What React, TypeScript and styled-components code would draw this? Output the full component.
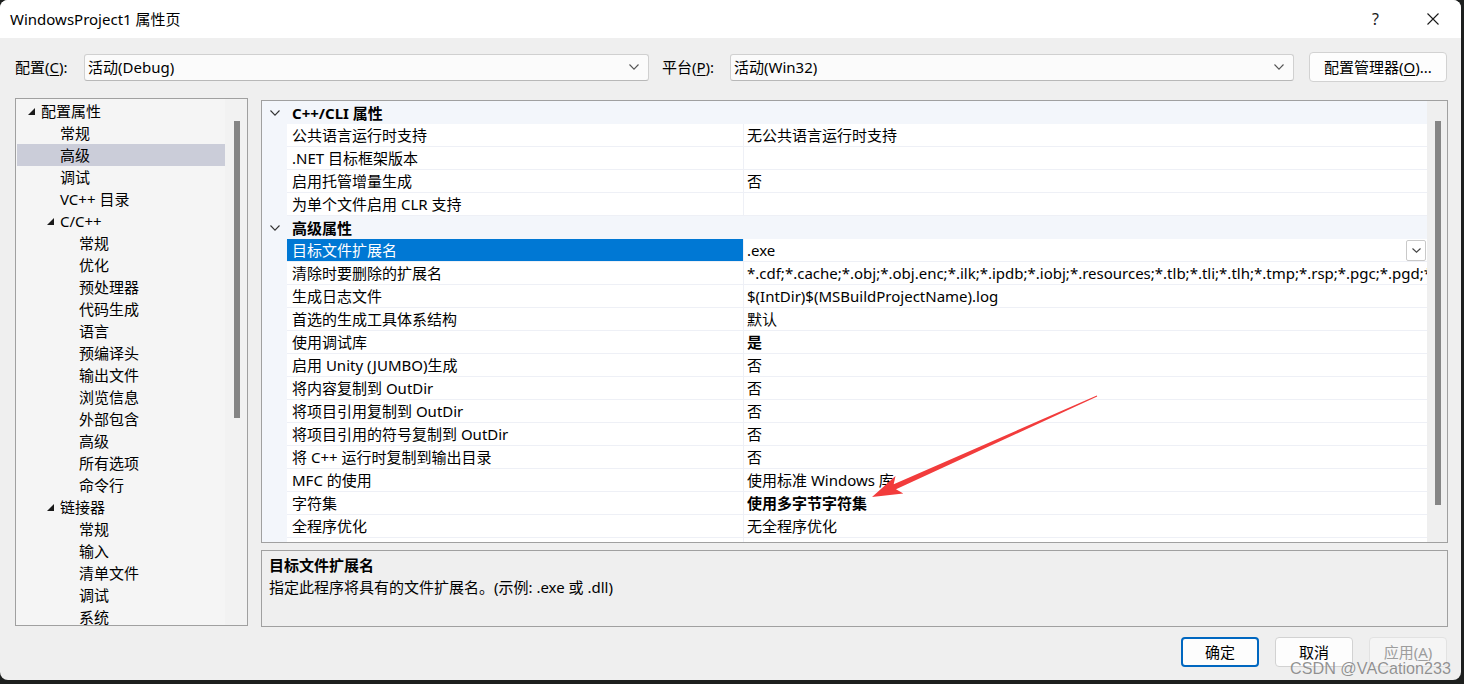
import React from "react";
import styled, { createGlobalStyle } from "styled-components";

const FONT = `"Noto Sans", "Noto Sans CJK SC", sans-serif`;

const Global = createGlobalStyle`
  html, body { margin: 0; padding: 0; background: #1d1f1e; }
  body { font-family: ${FONT}; font-size: 15px; color: #000; }
  * { box-sizing: border-box; }
  #root { width: 1464px; height: 684px; position: relative; overflow: hidden; }
`;

const Window = styled.div`
  width: 1461px;
  height: 680px;
  background: #efefef;
  border-radius: 8px;
  overflow: hidden;
  display: flex;
  flex-direction: column;
`;

const TitleBar = styled.div`
  height: 38px;
  background: #ffffff;
  display: flex;
  align-items: center;
  padding-left: 10px;
  flex: none;
`;

const TitleText = styled.div`
  flex: 1;
  font-size: 15px;
  line-height: 20px;
`;

const CaptionButton = styled.div`
  width: 57px;
  height: 38px;
  display: flex;
  align-items: center;
  justify-content: center;
  font-size: 16px;
  color: #1a1a1a;
`;

const Content = styled.div`
  flex: 1;
  display: flex;
  flex-direction: column;
  padding: 0 13px 0 15px;
`;

const ConfigRow = styled.div`
  margin-top: 14px;
  height: 30px;
  display: flex;
  align-items: center;
`;

const FieldLabel = styled.div<{ $w: number; $ml?: number }>`
  width: ${(p) => p.$w}px;
  margin-left: ${(p) => p.$ml ?? 0}px;
  flex: none;
  line-height: 20px;
`;

const U = styled.span`
  text-decoration: underline;
  text-underline-offset: 2px;
`;

const Combo = styled.div<{ $w: number }>`
  width: ${(p) => p.$w}px;
  height: 27px;
  flex: none;
  background: #fbfbfb;
  border: 1px solid #d0d0d0;
  border-bottom-color: #b8b8b8;
  border-radius: 3px;
  display: flex;
  align-items: center;
  padding: 0 9px 0 3px;
`;

const ComboText = styled.div`
  flex: 1;
  line-height: 20px;
  white-space: nowrap;
`;

const PushButton = styled.div<{ $w: number; $variant?: "default" | "primary" | "disabled"; $ml?: number }>`
  width: ${(p) => p.$w}px;
  height: 30px;
  flex: none;
  margin-left: ${(p) => p.$ml ?? 0}px;
  display: flex;
  align-items: center;
  justify-content: center;
  border-radius: 4px;
  line-height: 20px;
  background: ${(p) => (p.$variant === "disabled" ? "#f5f5f5" : "#fdfdfd")};
  border: ${(p) =>
    p.$variant === "primary"
      ? "2px solid #0067c0"
      : p.$variant === "disabled"
      ? "1px solid #e2e2e2"
      : "1px solid #d2d2d2"};
  color: ${(p) => (p.$variant === "disabled" ? "#9d9d9d" : "#000")};
`;

const Main = styled.div`
  margin-top: 16px;
  display: flex;
  align-items: flex-start;
  gap: 13px;
`;

const TreePanel = styled.div`
  width: 233px;
  height: 528px;
  border: 1px solid #a0a0a0;
  background: #f5f5f5;
  display: flex;
  overflow: hidden;
  flex: none;
`;

const TreeList = styled.div`
  flex: 1;
  padding: 1px 0 0 1px;
  overflow: hidden;
`;

const TreeRow = styled.div<{ $level: number; $selected?: boolean }>`
  height: 22px;
  display: flex;
  align-items: center;
  padding-left: ${(p) => 24 + p.$level * 19}px;
  background: ${(p) => (p.$selected ? "#cbcdd9" : "transparent")};
  white-space: nowrap;
  line-height: 20px;
`;

const Toggle = styled.span`
  width: 7px;
  height: 7px;
  margin-left: -13px;
  margin-right: 6px;
  display: inline-flex;
`;

const ScrollTrack = styled.div<{ $w: number; $bg: string }>`
  width: ${(p) => p.$w}px;
  flex: none;
  background: ${(p) => p.$bg};
  display: flex;
  justify-content: center;
`;

const Thumb = styled.div<{ $top: number; $h: number; $ml?: number }>`
  width: 6px;
  height: ${(p) => p.$h}px;
  margin-top: ${(p) => p.$top}px;
  margin-left: ${(p) => p.$ml ?? 0}px;
  background: #858585;
`;

const RightColumn = styled.div`
  margin-top: 2px;
  width: 1187px;
  display: flex;
  flex-direction: column;
  gap: 7px;
`;

const GridPanel = styled.div`
  height: 443px;
  border: 1px solid #a0a0a0;
  display: flex;
  background: #ffffff;
  overflow: hidden;
`;

const GridRows = styled.div`
  flex: 1;
  overflow: hidden;
`;

const CategoryRow = styled.div`
  height: 23px;
  display: grid;
  grid-template-columns: 25px 1fr;
  background: #f3f6fb;
  align-items: center;
`;

const Gutter = styled.div`
  height: 23px;
  background: #f3f6fb;
  display: flex;
  align-items: center;
  justify-content: center;
  padding-left: 1px;
`;

const CategoryTitle = styled.div`
  font-weight: 700;
  padding-left: 5px;
  line-height: 20px;
`;

const PropRow = styled.div`
  height: 23px;
  display: grid;
  grid-template-columns: 25px 457px 1fr;
`;

const NameCell = styled.div<{ $selected?: boolean }>`
  height: 23px;
  padding-left: 5px;
  display: flex;
  align-items: center;
  white-space: nowrap;
  overflow: hidden;
  line-height: 20px;
  border-bottom: 1px solid #eef0f6;
  border-right: 1px solid #eef0f6;
  background: ${(p) => (p.$selected ? "#0078d4" : "#ffffff")};
  color: ${(p) => (p.$selected ? "#ffffff" : "#000")};
`;

const ValueCell = styled.div<{ $bold?: boolean }>`
  height: 23px;
  padding-left: 3px;
  display: flex;
  align-items: center;
  white-space: nowrap;
  overflow: hidden;
  line-height: 20px;
  border-bottom: 1px solid #eef0f6;
  font-weight: ${(p) => (p.$bold ? 700 : 400)};
`;

const ValueText = styled.span`
  flex: 1;
  overflow: hidden;
`;

const DropButton = styled.div`
  width: 20px;
  height: 21px;
  flex: none;
  margin-right: 1px;
  border: 1px solid #c9c9c9;
  border-radius: 2px;
  background: #fff;
  display: flex;
  align-items: center;
  justify-content: center;
`;

const DescPanel = styled.div`
  height: 77px;
  border: 1px solid #a0a0a0;
  background: #efefef;
  padding: 3px 7px;
`;

const DescTitle = styled.div`
  font-weight: 700;
  line-height: 22px;
`;

const DescText = styled.div`
  line-height: 22px;
`;

const ButtonRow = styled.div`
  margin-top: 10px;
  display: flex;
  justify-content: flex-end;
  gap: 16px;
  padding-right: 1px;
`;

const Watermark = styled.div`
  position: absolute;
  left: 1290px;
  top: 658px;
  font-family: "Liberation Sans", Arial, sans-serif;
  font-size: 16.2px;
  line-height: 20px;
  color: rgba(105, 105, 105, 0.72);
  text-shadow: 0 0 1px rgba(255, 255, 255, 0.6);
  white-space: nowrap;
  pointer-events: none;
`;

const ArrowLayer = styled.svg`
  position: absolute;
  left: 0;
  top: 0;
  pointer-events: none;
`;

const Chevron = ({ w = 10, h = 6, color = "#555" }: { w?: number; h?: number; color?: string }) => (
  <svg width={w} height={h} viewBox={`0 0 ${w} ${h}`}>
    <polyline points={`0.5,0.5 ${w / 2},${h - 0.8} ${w - 0.5},0.5`} fill="none" stroke={color} strokeWidth="1.1" />
  </svg>
);

const Triangle = () => (
  <svg width="7" height="7" viewBox="0 0 7 7">
    <polygon points="7,0 7,7 0,7" fill="#1a1a1a" />
  </svg>
);

const CloseIcon = () => (
  <svg width="12" height="12" viewBox="0 0 12 12">
    <path d="M0.5 0.5 L11.5 11.5 M11.5 0.5 L0.5 11.5" stroke="#1a1a1a" strokeWidth="1.1" fill="none" />
  </svg>
);

type TreeItem = { t: string; l: number; open?: boolean; sel?: boolean };
const treeItems: TreeItem[] = [
  { t: "配置属性", l: 0, open: true },
  { t: "常规", l: 1 },
  { t: "高级", l: 1, sel: true },
  { t: "调试", l: 1 },
  { t: "VC++ 目录", l: 1 },
  { t: "C/C++", l: 1, open: true },
  { t: "常规", l: 2 },
  { t: "优化", l: 2 },
  { t: "预处理器", l: 2 },
  { t: "代码生成", l: 2 },
  { t: "语言", l: 2 },
  { t: "预编译头", l: 2 },
  { t: "输出文件", l: 2 },
  { t: "浏览信息", l: 2 },
  { t: "外部包含", l: 2 },
  { t: "高级", l: 2 },
  { t: "所有选项", l: 2 },
  { t: "命令行", l: 2 },
  { t: "链接器", l: 1, open: true },
  { t: "常规", l: 2 },
  { t: "输入", l: 2 },
  { t: "清单文件", l: 2 },
  { t: "调试", l: 2 },
  { t: "系统", l: 2 },
];

type GridItem =
  | { kind: "cat"; t: string }
  | { kind: "prop"; n: string; v: string; bold?: boolean; sel?: boolean };

const gridItems: GridItem[] = [
  { kind: "cat", t: "C++/CLI 属性" },
  { kind: "prop", n: "公共语言运行时支持", v: "无公共语言运行时支持" },
  { kind: "prop", n: ".NET 目标框架版本", v: "" },
  { kind: "prop", n: "启用托管增量生成", v: "否" },
  { kind: "prop", n: "为单个文件启用 CLR 支持", v: "" },
  { kind: "cat", t: "高级属性" },
  { kind: "prop", n: "目标文件扩展名", v: ".exe", sel: true },
  {
    kind: "prop",
    n: "清除时要删除的扩展名",
    v: "*.cdf;*.cache;*.obj;*.obj.enc;*.ilk;*.ipdb;*.iobj;*.resources;*.tlb;*.tli;*.tlh;*.tmp;*.rsp;*.pgc;*.pgd;*.meta;*.tlog;*.manifest;*.res;*.pch;*.exp;*.idb;*.rep;*.xdc;*.pdb",
  },
  { kind: "prop", n: "生成日志文件", v: "$(IntDir)$(MSBuildProjectName).log" },
  { kind: "prop", n: "首选的生成工具体系结构", v: "默认" },
  { kind: "prop", n: "使用调试库", v: "是", bold: true },
  { kind: "prop", n: "启用 Unity (JUMBO)生成", v: "否" },
  { kind: "prop", n: "将内容复制到 OutDir", v: "否" },
  { kind: "prop", n: "将项目引用复制到 OutDir", v: "否" },
  { kind: "prop", n: "将项目引用的符号复制到 OutDir", v: "否" },
  { kind: "prop", n: "将 C++ 运行时复制到输出目录", v: "否" },
  { kind: "prop", n: "MFC 的使用", v: "使用标准 Windows 库" },
  { kind: "prop", n: "字符集", v: "使用多字节字符集", bold: true },
  { kind: "prop", n: "全程序优化", v: "无全程序优化" },
  { kind: "prop", n: "MSVC 工具集版本", v: "默认" },
];

// Arrow geometry
const tip = { x: 872, y: 497 };
const tail = { x: 1097, y: 396 };
const dx = tail.x - tip.x;
const dy = tail.y - tip.y;
const len = Math.hypot(dx, dy);
const ux = dx / len;
const uy = dy / len;
const nx = -uy;
const ny = ux;
const at = (d: number, s: number) => `${(tip.x + ux * d + nx * s).toFixed(1)},${(tip.y + uy * d + ny * s).toFixed(1)}`;
const arrowPoints = [at(0, 0), at(30, -9.5), at(25, -2.8), at(len, -0.4), at(len, 0.4), at(25, 2.8), at(30, 9.5)].join(" ");

export default function App() {
  return (
    <>
      <Global />
      <Window>
        <TitleBar>
          <TitleText>WindowsProject1 属性页</TitleText>
          <CaptionButton>?</CaptionButton>
          <CaptionButton>
            <CloseIcon />
          </CaptionButton>
        </TitleBar>
        <Content>
          <ConfigRow>
            <FieldLabel $w={69}>
              配置(<U>C</U>):
            </FieldLabel>
            <Combo $w={565}>
              <ComboText>活动(Debug)</ComboText>
              <Chevron />
            </Combo>
            <FieldLabel $w={68} $ml={13}>
              平台(<U>P</U>):
            </FieldLabel>
            <Combo $w={564}>
              <ComboText>活动(Win32)</ComboText>
              <Chevron />
            </Combo>
            <PushButton $w={138} $ml={15}>
              配置管理器(<U>O</U>)...
            </PushButton>
          </ConfigRow>
          <Main>
            <TreePanel>
              <TreeList>
                {treeItems.map((it, i) => (
                  <TreeRow key={i} $level={it.l} $selected={it.sel}>
                    {it.open && (
                      <Toggle>
                        <Triangle />
                      </Toggle>
                    )}
                    {it.t}
                  </TreeRow>
                ))}
              </TreeList>
              <ScrollTrack $w={22} $bg="#f2f2f2">
                <Thumb $top={22} $h={297} $ml={2} />
              </ScrollTrack>
            </TreePanel>
            <RightColumn>
              <GridPanel>
                <GridRows>
                  {gridItems.map((it, i) =>
                    it.kind === "cat" ? (
                      <CategoryRow key={i}>
                        <Gutter>
                          <Chevron w={10} h={6} color="#333" />
                        </Gutter>
                        <CategoryTitle>{it.t}</CategoryTitle>
                      </CategoryRow>
                    ) : (
                      <PropRow key={i}>
                        <Gutter />
                        <NameCell $selected={it.sel}>{it.n}</NameCell>
                        <ValueCell $bold={it.bold}>
                          <ValueText>{it.v}</ValueText>
                          {it.sel && (
                            <DropButton>
                              <Chevron w={9} h={5} color="#444" />
                            </DropButton>
                          )}
                        </ValueCell>
                      </PropRow>
                    )
                  )}
                </GridRows>
                <ScrollTrack $w={20} $bg="#efefef">
                  <Thumb $top={20} $h={384} $ml={2} />
                </ScrollTrack>
              </GridPanel>
              <DescPanel>
                <DescTitle>目标文件扩展名</DescTitle>
                <DescText>指定此程序将具有的文件扩展名。(示例: .exe 或 .dll)</DescText>
              </DescPanel>
            </RightColumn>
          </Main>
          <ButtonRow>
            <PushButton $w={78} $variant="primary">
              确定
            </PushButton>
            <PushButton $w={78}>取消</PushButton>
            <PushButton $w={78} $variant="disabled">
              应用(<U>A</U>)
            </PushButton>
          </ButtonRow>
        </Content>
      </Window>
      <ArrowLayer width="1464" height="684" viewBox="0 0 1464 684">
        <polygon points={arrowPoints} fill="#f23c3c" />
      </ArrowLayer>
      <Watermark>CSDN @VACation233</Watermark>
    </>
  );
}
